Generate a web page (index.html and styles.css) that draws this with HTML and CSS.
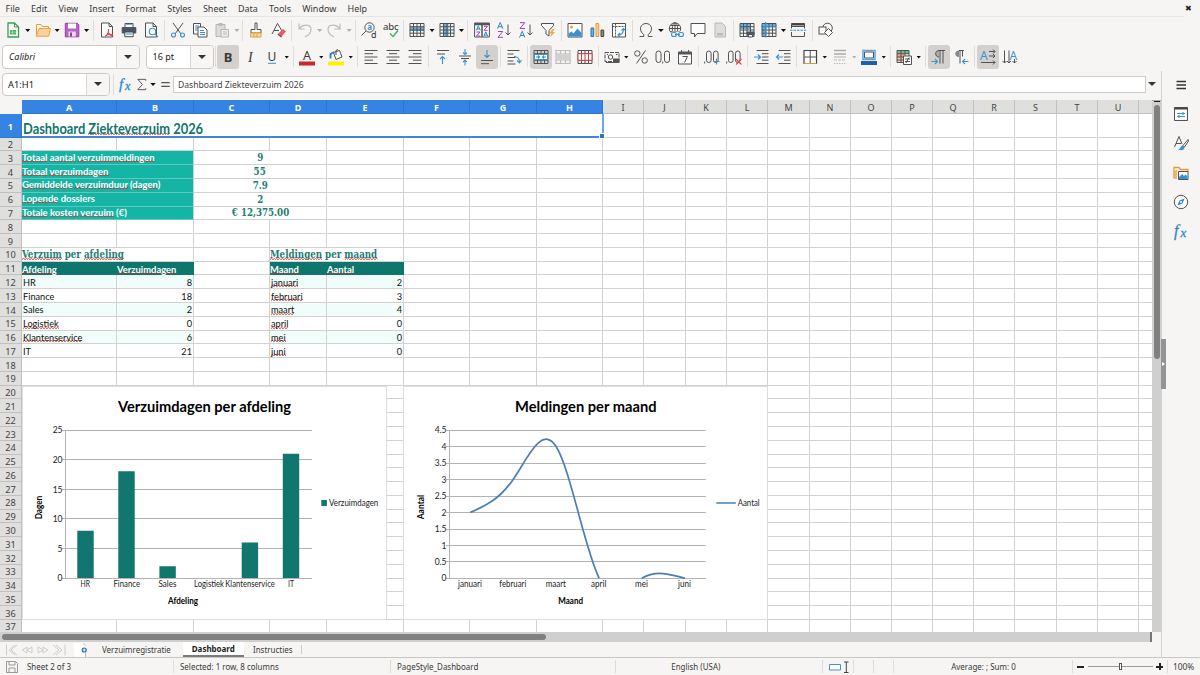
FILE: index.html
```
<!DOCTYPE html>
<html lang="nl">
<head>
    <meta charset="UTF-8">
    <meta name="viewport" content="width=device-width, initial-scale=1.0">
    <title>Dashboard Ziekteverzuim 2026</title>
    <link rel="stylesheet" href="styles.css">
</head>
<body>
    <nav class="menu">
        <span>File</span><span>Edit</span><span>View</span><span>Insert</span><span>Format</span><span>Styles</span><span>Sheet</span><span>Data</span><span>Tools</span><span>Window</span><span>Help</span>
        <b class="close">✖</b>
    </nav>

    <div class="toolbar standard" id="standardBar"></div>

    <div class="toolbar format">
        <div class="combo font-name"><i>Calibri</i><span class="arrow"></span></div>
        <div class="combo font-size"><em>16 pt</em><span class="arrow"></span></div>
        <div class="tools" id="formatBar"></div>
    </div>

    <div class="main">
        <div class="work">
            <div class="formula">
                <div class="combo name-box"><em>A1:H1</em><span class="arrow"></span></div>
                <div class="tools" id="formulaBar"></div>
                <div class="input"><span>Dashboard Ziekteverzuim 2026</span></div>
                <span class="big-arrow"></span>
            </div>

            <div class="sheet-row">
                <div class="sheet">
                    <div class="grid" id="grid"></div>
                    <div class="selection"></div>

                    <svg class="chart chart-bar" viewBox="22 386 365 234">
                        <text class="chart-title" x="118" y="412" textLength="173">Verzuimdagen per afdeling</text>
                        <path class="lines" d="M62 430.5H312M62 459.5H312M62 489.5H312M62 518.5H312M62 548.5H312M62 578.5H312M65.5 430V579"/>
                        <g class="axis end">
                            <text x="62.5" y="433">25</text><text x="62.5" y="462.5">20</text><text x="62.5" y="492.5">15</text>
                            <text x="62.5" y="521.5">10</text><text x="62.5" y="551.5">5</text><text x="62.5" y="581">0</text>
                        </g>
                        <path fill="#10766e" d="M77.3 530.7h16.4V578H77.3zM118.3 471.3h16.4V578h-16.4zM159.4 566.3h16.4V578h-16.4zM241.7 542.4h16.4V578h-16.4zM282.8 453.7h16.4V578h-16.4z"/>
                        <g class="axis">
                            <text x="80.5" y="587.3" textLength="9.5">HR</text><text x="113.5" y="587.3" textLength="26.5">Finance</text>
                            <text x="158.5" y="587.3" textLength="18">Sales</text><text x="194" y="587.3" textLength="30">Logistiek</text>
                            <text x="225.3" y="587.3" textLength="49.5">Klantenservice</text><text x="288" y="587.3" textLength="6">IT</text>
                            <text x="329" y="505.7" textLength="49.3">Verzuimdagen</text>
                        </g>
                        <text class="axis-title" x="168" y="604" textLength="30">Afdeling</text>
                        <text class="axis-title" transform="translate(42.3 519.3) rotate(-90)" textLength="23.5">Dagen</text>
                        <path fill="#10766e" d="M321.3 500h5.6v6h-5.6z"/>
                    </svg>

                    <svg class="chart chart-line" viewBox="403 386 365 234">
                        <text class="chart-title" x="515" y="412" textLength="141.5">Meldingen per maand</text>
                        <path class="lines" d="M446 430.5H706M446 446.5H706M446 463.5H706M446 479.5H706M446 496.5H706M446 512.5H706M446 529.5H706M446 545.5H706M446 561.5H706M446 578.5H706M449.5 430V579"/>
                        <g class="axis end">
                            <text x="446.5" y="433">4.5</text><text x="446.5" y="449.5">4</text><text x="446.5" y="466">3.5</text><text x="446.5" y="482.5">3</text>
                            <text x="446.5" y="499">2.5</text><text x="446.5" y="515.5">2</text><text x="446.5" y="532">1.5</text><text x="446.5" y="548.5">1</text>
                            <text x="446.5" y="564.5">0.5</text><text x="446.5" y="581">0</text>
                        </g>
                        <path class="series" d="M470.4 512.4C484.7 506.2 498.9 500 513.2 479.4S541.8 424 556.1 446.5S584.6 548.9 599.2 578.3M641.7 578.3C656 569.9 670.3 574.1 685 578.3M716.3 503h19.5"/>
                        <g class="axis">
                            <text x="458" y="587.3" textLength="24">januari</text><text x="499.3" y="587.3" textLength="27">februari</text>
                            <text x="545.7" y="587.3" textLength="20.3">maart</text><text x="591" y="587.3" textLength="15.3">april</text>
                            <text x="635" y="587.3" textLength="13">mei</text><text x="678" y="587.3" textLength="13">juni</text>
                            <text x="737.7" y="505.7" textLength="22">Aantal</text>
                        </g>
                        <text class="axis-title" x="558.3" y="604" textLength="24.7">Maand</text>
                        <text class="axis-title" transform="translate(424 519.3) rotate(-90)" textLength="24.5">Aantal</text>
                    </svg>
                </div>
                <div class="vscroll"><div class="thumb"></div></div>
            </div>

            <div class="hscroll"><div class="thumb"></div></div>

            <div class="tabs">
                <svg class="tab-nav" viewBox="0 0 62 14"><path d="M1.500 1.500v11M10 2L4 7l6 5M12 2L6 7l6 5M22 4l-5 3 5 3zM27 4l-5 3 5 3zM33 4l5 3-5 3zM38 4l5 3-5 3zM48 2l6 5-6 5M51 2l6 5-6 5M60 1.500v11"/></svg>
                <svg class="tab-add" viewBox="0 0 14 14"><path d="M0 0h9.500l2 2v12H0z" fill="#fff"/><path d="M11.500 9.500v4.500M9 0.500l2.500 2" stroke="#bbb" fill="none"/><circle cx="10.200" cy="7" r="2.600" fill="#2c6bb5"/><path d="M10.200 5.500v3M8.700 7h3" stroke="#fff"/></svg>
                <span class="tab first"><span>Verzuimregistratie</span></span>
                <span class="tab active"><span>Dashboard</span></span>
                <span class="tab last"><span>Instructies</span></span>
            </div>
        </div>
        <aside class="sidebar" id="sidebar"></aside>
        <div class="handle"></div>
    </div>

    <footer class="status">
        <div class="sheet-no"><svg viewBox="0 0 12 12"><path d="M.5.500h9l2 2v9H.500zM3 .500v3.500h6V.500M3 11.500V7h6v4.500" fill="none" stroke="#999"/></svg><span>Sheet 2 of 3</span></div>
        <div class="selected"><span>Selected: 1 row, 8 columns</span></div>
        <div class="page-style"><span>PageStyle_Dashboard</span></div>
        <div class="lang"><span>English (USA)</span></div>
        <div class="mode"><svg viewBox="0 0 20 12"><path d="M.500 3.500h11v5.500H.500z" fill="#fff" stroke="#3f93cd"/><path d="M15 1h4.500M15 11.500h4.500M17.300 1v10.500" stroke="#444" fill="none"/></svg></div>
        <div class="empty"></div>
        <div class="empty"></div>
        <div class="sum"><span>Average: ; Sum: 0</span></div>
        <div class="zoom"><b></b><i class="slider"><i></i></i><b class="plus"></b></div>
        <div class="percent"><span>100%</span></div>
    </footer>

    <script>
        // Icons are drawn on a 16 x 16 canvas. k = dark stroke, b = blue, r = red, g = grey
        const DOC = '<path class="k w" d="M2.500 1h7.500l3.500 3.500V15h-11zM10 1v3.500h3.500"/>';
        const GRID = '<path class="k" d="M1 1.500h14v13H1zM1 4.700h14M1 8h14M1 11.200h14M4.500 1.500v13M8 1.500v13M11.500 1.500v13"/>';
        const ICONS = {
            new: '<path d="M3 1h6.500l4 4v10H3z" fill="#fff" stroke="#36a04c" stroke-width="1.300"/><path d="M9.500 1v4h4" fill="none" stroke="#36a04c"/><path d="M5 8h6v4.500H5z" fill="#45b35c"/><path d="M5 10.200h6M7.500 8v4.500" stroke="#c9efd0" stroke-width=".6"/>',
            open: '<path d="M1.500 13.500v-11h4.500l1.500 2h6v2" fill="#fff6e5" stroke="#e69a3c"/><path d="M1 14.200L4 6.500h11.500l-1.800 7.700z" fill="#fcd49b" stroke="#eda149"/>',
            save: '<path d="M1.300 1.300h12l1.500 1.500v12H1.300z" fill="#b963c5" stroke="#8f3fa0"/><path d="M4 1.500h8v5H4z" fill="#fff"/><path d="M4.500 9.500h7.300v5H4.500z" fill="#efd9f3"/><path d="M6 10.500h2v4H6z" fill="#8f3fa0"/>',
            pdf: DOC + '<path class="r" d="M6 14.500c3-2 4-5 3.500-7.500M9 10c1 2.500 3 4 5.500 4M6 14.300c2-2 5-2.500 8-1.500"/>',
            print: '<path class="k w" d="M4 1.500h8V6H4z"/><rect x=".7" y="5" width="14.600" height="6.500" rx="1.200" fill="#4d5660"/><path d="M3.800 10h8.400v4.700H3.800z" fill="#fff" stroke="#444"/><path class="b" d="M5 12h6"/><path d="M4 2.500h8" stroke="#64b1e2"/>',
            preview: DOC + '<circle class="b" cx="9.500" cy="9.500" r="3.200" fill="#e8f4fc"/><path class="b" d="M12 12l3 3" stroke-width="1.600"/>',
            cut: '<path class="k" d="M3 1l8 11M13 1L5 12"/><circle class="b" cx="3.500" cy="13" r="2"/><circle class="b" cx="12.500" cy="13" r="2"/>',
            copy: '<path class="k w" d="M1.500 1.500h7V12h-7z"/><path d="M3 4h4M3 6h4M3 8h4" class="b"/><path class="k w" d="M6 5h6l3 3v7H6z"/><path d="M8 8.500h4M8 10.500h5M8 12.500h5" class="b"/>',
            paste: '<path d="M2 2.500h9v12H2z" fill="#ddd" stroke="#b5b5b5"/><path d="M4.500 1h4v3h-4z" fill="#bbb"/><path d="M7 7.500h7.500V15H7z" fill="#eee" stroke="#b5b5b5"/><path class="g" d="M9 10h4M9 12h4"/>',
            brush: '<path class="k w" d="M7 1h2v6.500h4V11H3V7.500h4z"/><path d="M3 11h10v4H2.500z" fill="#fcd9a5" stroke="#e69a3c"/><path d="M6 12v3M9 12v3" stroke="#e69a3c"/>',
            clear: '<path class="k" d="M2 12L7.500 1.500 12 9M4 8.500h5" stroke-width="1.400"/><path d="M8.500 11.500L13 7l3 2.500-4.500 5z" fill="#e75a5f"/><path d="M8 12l3.500 3" stroke="#b52d35" stroke-width="1.500"/>',
            undo: '<path class="g" d="M2 1.500V7h5.500M2 7c4-5.500 12-5 12 .5 0 3-3 6-6 7.500"/>',
            redo: '<path class="g" d="M14 1.500V7H8.500M14 7C10 1.500 2 2 2 7.500c0 3 3 6 6 7.500"/>',
            find: '<circle class="k" cx="8.500" cy="5.500" r="4.700"/><path class="k" d="M5 9l-4.500 4.500" stroke-width="1.800"/><text x="6.200" y="8" font-size="8" font-weight="bold" fill="#3b92d1">a</text><text x="10" y="15.500" font-size="9" fill="#333">d</text>',
            spell: '<text x="0" y="7.800" font-size="9.600" textLength="15.500" fill="#333">abc</text><path d="M7 11.500l3 3 5-6" fill="none" stroke="#41b36a" stroke-width="1.500"/>',
            rows: '<path fill="#64b1e2" d="M1 5h14v4H1z"/>' + GRID,
            cols: '<path fill="#64b1e2" d="M4.500 1.500h5v13h-5z"/>' + GRID,
            sort: '<path class="k w" d="M.6 1h7.400v14H.600zM8 1h7.400v14H8z"/><path fill="#555" d="M.6 1h14.800v2.300H.600z"/><g class="zig"><path class="ta" d="M2.300 8.300l2-4.500 2 4.500M3 7h2.600M9.800 14.300l2-4.500 2 4.500M10.500 13h2.600"/><path class="tz" d="M2.500 10h3.500L2.500 14h3.700M10 4.300h3.500L10 8.300h3.700"/></g>',
            az: '<path class="ta" d="M1.500 6.700L4.200.5l2.700 6.200M2.400 4.700h3.700"/><path class="tz" d="M2 9.500h4.700L2 15.300h5"/><path class="k" d="M12 2.500V13M9.500 10.500L12 13l2.500-2.500"/>',
            za: '<path class="ta" d="M1.500 15.500L4.200 9.300l2.700 6.200M2.400 13.500h3.700"/><path class="tz" d="M2 .7h4.700L2 6.500h5"/><path class="k" d="M12 2.500V13M9.500 10.500L12 13l2.500-2.500"/>',
            filter: '<path class="k w" d="M1.500 1.500h12v2L9 8.500V14l-3-2V8.500L1.500 3.500z"/><path d="M12.500 7L9 11.500h2.500L10 15.500l5-5.500h-2.500L14.500 7z" fill="#f3a64d"/>',
            image: '<path class="k w" d="M1 1.500h14v13.500H1z"/><circle cx="4.500" cy="5" r="1.500" fill="#f0a04b"/><path d="M1.500 14.500v-3l3-2 2 2 4-5 4 4.500v3.500z" fill="#3b92d1"/>',
            chart: '<path d="M2 6h2.700v8.500H2z" fill="#64b1e2" stroke="#2c75b5"/><path d="M7 1.500h2.700v13H7z" fill="#fbd08f" stroke="#e69a3c"/><path d="M12 8h2.700v6.500H12z" fill="#888" stroke="#444"/>',
            pivot: '<path class="k w" d="M1.500 1.500h13v13.500h-13z"/><path class="k" d="M1.500 4.500h13M4.500 1.500V15" stroke-dasharray="2 1"/><path class="b" d="M7 13c4 0 5.500-2 5.500-6M10.500 8.500l2-2 2 2M9 11l-2 2 2 2"/>',
            omega: '<path class="k" d="M1.500 14.500h4.300v-1.800C0 8 2.500 1.500 8 1.500s8 6.500 2.200 11.200v1.800h4.300" stroke-width="1.300"/>',
            link: '<circle class="k" cx="7" cy="6.500" r="5.700"/><path class="k" d="M1.300 6.500h11.400M7 .8v11.400M2.500 3.500h9M2.500 9.500h9"/><ellipse class="k" cx="7" cy="6.500" rx="2.700" ry="5.700"/><path d="M3.500 9.500h12.500v6H3.500z" fill="#f6f5f4"/><rect class="b" x="3.500" y="10.500" width="5" height="4" rx="2"/><rect class="b" x="10.500" y="10.500" width="5" height="4" rx="2"/><path class="b" d="M7 12.500h5"/>',
            comment: '<path class="k w" d="M1 1.500h14v10H7L4.500 15v-3.500H1z"/>',
            footer: '<path d="M3 1h7l3.500 3.500V15H3z" fill="#ddd" stroke="#b9b9b9"/><path d="M5 11h6v2.500H5z" fill="#bbb"/>',
            printarea: '<path fill="#64b1e2" d="M1 1h10v6H1z"/>' + GRID + '<rect x="7.500" y="9.500" width="8" height="4" rx="1" fill="#4d5660"/><path class="k w" d="M9.500 12.500h4V15h-4z"/>',
            freeze: '<path fill="#64b1e2" d="M1 1.500h4.500v13H1zM5 1.500h10v3H5z"/>' + GRID + '<path class="b" d="M4.700 0v15.500M0 4.700h15"/>',
            split: '<path class="k" d="M1.500 6.500v-5h13v5M1.500 10v4.500h13V10M1.500 4.500h13"/><path d="M1.500 1.500h13v2h-13z" fill="#444"/><path class="b" d="M0 8.300h16" stroke-dasharray="2.500 1"/>',
            shapes: '<circle class="k" cx="9.500" cy="6" r="4.800"/><rect class="k w" x="1" y="5" width="7" height="7"/><path class="k w" d="M10.500 6.500l4 4-4 4-4-4z"/>',
            bold: '<text class="glyph" x="3.700" y="12.700" font-size="13" font-weight="bold">B</text>',
            italic: '<text class="glyph" x="6" y="12.700" font-size="14" font-style="italic" font-family="Liberation Serif">I</text>',
            underline: '<text class="glyph" x="3.600" y="12" font-size="12">U</text><path d="M4 14.300h8" stroke="#3b92d1"/>',
            color: '<text class="glyph" x="4" y="11" font-size="12.500">A</text><path fill="#c62a2a" d="M0 12.500h16V16.500H0z"/>',
            fill: '<path class="k w" d="M5.500 3.500l6-2 2.500 6.500-6 2.500z" stroke-width="1.300"/><path class="k" d="M8 6V1.500l2-1"/><path d="M2.500 9.500V5L6 3" fill="none" stroke="#2d7ec0" stroke-width="1.800"/><path fill="#fff200" d="M0 12.500h16V16.500H0z"/>',
            left: '<path class="k" d="M1.500 1.500h13M1.500 4.700h8.500M1.500 8h13M1.500 11.200h8.500M1.500 14.500h13"/>',
            center: '<path class="k" d="M1.500 1.500h13M4 4.700h8M1.500 8h13M4 11.200h8M1.500 14.500h13"/>',
            right: '<path class="k" d="M1.500 1.500h13M6 4.700h8.500M1.500 8h13M6 11.200h8.500M1.500 14.500h13"/>',
            top: '<path class="k" d="M2 1.500h12M2 5h8"/><path class="b" d="M7.500 15V7.500M5 10l2.500-2.500L10 10"/>',
            middle: '<path class="k" d="M2 7h12M4 9.500h8"/><path class="b" d="M8 0v5.500M6 3.500l2 2 2-2M8 16.500V11M6 13l2-2 2 2"/>',
            bottom: '<path class="k" d="M2 11.500h12M2 14.700h8"/><path class="b" d="M8 1v7.500M5.500 6L8 8.500 10.500 6"/>',
            wrap: '<path class="k" d="M1.500 1.500h12M1.500 5h6M1.500 8.500h8M1.500 12h6M1.500 15h8"/><path class="b" d="M8 7.500c4 0 5.500 2 5.500 6M11 11.500l2.500 2.500 2-3"/>',
            merge: GRID + '<path d="M1.500 5.500h13v5h-13z" fill="#fff" stroke="#3b92d1"/><path class="b" d="M3 8h3.500M9.500 8H13M5 6.500L6.500 8 5 9.500M11 6.500L9.500 8 11 9.500"/>',
            merge2: '<path class="g" d="M1 1.500h14v13H1zM1 5h14M1 11h14M5.500 1.500V5M10.500 1.500V5M5.500 11v3.500M10.500 11v3.500"/><path fill="#d0d0d0" d="M1.500 5.500h13v5h-13z"/>',
            merge3: GRID + '<path d="M1 4.700h14v6.600H1zM4.500 4.700v6.600M8 4.700v6.600M11.500 4.700v6.600" fill="#fff" stroke="#dd3c44"/>',
            currency: '<path class="k" d="M1 3.500h14v9H1z" stroke-dasharray="4 1"/><circle cx="6.500" cy="8" r="2.200" class="k"/><path d="M9 9.500h6.500V14H9z" fill="#555"/><path class="k" d="M2 13.500h8M3 5.500h1M12 5.500h1.500"/>',
            percent: '<circle class="k" cx="4.300" cy="4.500" r="2.700"/><circle class="k" cx="11.700" cy="11.500" r="2.700"/><path class="k" d="M12.500 1.500L3.500 14.500"/>',
            number: '<rect class="k" x="1" y="2" width="5" height="11.500" rx="2.500"/><rect class="k" x="9.500" y="2" width="5" height="11.500" rx="2.500"/><path class="k" d="M7.700 12.500v2"/>',
            date: '<path class="k w" d="M1.500 3h13v12h-13z"/><path d="M1.500 3h13v2.500h-13z" fill="#555"/><path class="k" d="M4.500 1v3M11.500 1v3M5.500 7.500h5L7.500 13.500"/>',
            adddec: '<path class="k" d="M.7 12.500v2"/><rect class="k" x="2.500" y="2" width="4.600" height="11.500" rx="2.300"/><rect class="k" x="9.500" y="2" width="4.600" height="11.500" rx="2.300"/><path class="b" d="M12.500 9.500v6M9.500 12.500h6"/>',
            deldec: '<path class="k" d="M.7 12.500v2"/><rect class="k" x="2.500" y="2" width="4.600" height="11.500" rx="2.300"/><rect class="k" x="9.500" y="2" width="4.600" height="11.500" rx="2.300"/><path class="r" d="M10 10l5.500 5.500M15.500 10L10 15.500"/>',
            indent: '<path class="k" d="M2.500 1.500h12M8 4.700h6.500M8 8h6.500M8 11.200h6.500M2.500 14.500h12"/><path class="b" d="M0 8h6.500M4 5.500L6.500 8 4 10.500"/>',
            outdent: '<path class="k" d="M2.500 1.500h12M8 4.700h6.500M8 8h6.500M8 11.200h6.500M2.500 14.500h12"/><path class="b" d="M.5 8H7M3 5.500L.5 8 3 10.500"/>',
            borders: '<path d="M2 1.500h12.500v13H2z" fill="#fff" stroke="#444" stroke-width="1.200"/><path class="k" d="M8.200 1.500v13M2 8h12.500"/><path d="M2 14.500h12.500" stroke="#e69a3c"/>',
            lines: '<path d="M2 1.500h12M2 5h12" stroke="#aaa" stroke-width="1.500"/><path class="g" d="M2 8h12"/><path class="g" d="M2 11h12" stroke-dasharray="3 1"/><path class="g" d="M2 14.500h12" stroke-dasharray="1.500 1"/>',
            bcolor: '<path d="M2 1.500h12v9H2z" fill="#f7fbff" stroke="#5ba6dc" stroke-width="1.500"/><path class="k" d="M3.500 3h9v6h-9z"/><path fill="#245f9e" d="M0 12h16V16H0z"/>',
            cond: '<path fill="#6cc37c" d="M1 1.500h12v3H1z"/><path fill="#f19a9a" d="M1 4.700h7v4H1z"/><path fill="#fbd08f" d="M1 9h6v4H1z"/><path class="k" d="M1 1.500h12v12H1zM1 4.700h12M1 8h12M1 11h12M5 1.500v12M9 1.500v12"/><path class="k w" d="M7.500 7h8v8.500h-8z"/><path class="k" d="M9 10h5M9 12.500h5M13 8.500l-3 5.500"/>',
            ltr: '<path d="M8 1.500C3.500 1.500 3.500 8 8 8z" fill="#aaa"/><path class="k" d="M14 1.500H8C3.500 1.500 3.500 8 8 8M9 1.500v13M12 1.500v13"/><path class="b" d="M.5 12.500h6M4 10l2.500 2.500L4 15"/>',
            rtl: '<path d="M6 1.500C1 1.500 1 8 6 8z" fill="#888"/><path d="M6 1.500h5" class="k"/><path class="k" d="M7 1.500v13M9.500 1.500v6" stroke-width="1.400"/><path class="b" d="M15.500 12.500h-6M12 10l-2.500 2.500L12 15"/>',
            horiz: '<text x="0" y="10.500" font-size="12" fill="#3b92d1">A</text><path class="k" d="M9 2.500h6M9 7h6M1 13.500h14M13 .5l2 2-2 2M13 5l2 2-2 2M13 11.500l2 2-2 2"/>',
            vert: '<text x="7.500" y="10.500" font-size="12" fill="#3b92d1">A</text><path class="k" d="M2.500 1.500V14M7 1.500V14M12.500 10v4M.5 12l2 2 2-2M5 12l2 2 2-2M10.500 12l2 2 2-2"/>',
            fx: '<text class="fx" x="1" y="12.500" font-size="16">f</text><text class="fx" x="7.500" y="14" font-size="13">x</text>',
            sigma: '<path class="k" d="M12.500 4V2.500H4L9 8l-5 5.500h8.500V12" stroke-width="1.200"/>',
            equals: '<path d="M3.500 6h9M3.500 10h9" stroke="#555" stroke-width="1.500"/>',
            burger: '<path d="M3.500 4.500h9.500M3.500 8h9.500M3.500 11.500h9.500" stroke="#333" stroke-width="1.400"/>',
            props: '<path class="k w" d="M1.500 1.500h13V14.500h-13z"/><path d="M1.500 1.500h13v2h-13z" fill="#444"/><path class="b" d="M4 7.500h8M4 10.500h8M10 6v3M6 9v3"/>',
            styles: '<path class="k" d="M1.500 12L6 1.500l3 7.500M3 8.500h5" stroke-width="1.600"/><path class="k w" d="M15 4.500l-5 6 1.500 1.500 4-6z"/><path d="M10 10.500c-3 0-2 3.500-5 4 3.500 1.500 7 .5 6.500-2.500z" fill="#3b92d1"/>',
            gallery: '<path d="M1 13.500v-11h5l1.500 2h7.500v2" fill="#fff1dc" stroke="#e69a3c" stroke-width="1.300"/><path d="M1 14V6l3-1v9z" fill="#f3b266"/><path class="k w" d="M5.500 6.500H15v8H5.500z"/><path d="M6 14V12l3-3 2 2 1.500-1.500 2 2V14z" fill="#3b92d1"/>',
            nav: '<circle cx="8" cy="8" r="6.700" class="k w"/><path d="M11.500 4.500L9.500 9.500l-5 2 2-5z" fill="#2f86c8"/><circle cx="8" cy="8" r="1" fill="#fff"/>'
        };

        // "name:width", * marks a pressed button, "|" is a separator, "v" a dropdown arrow
        const STANDARD = 'new:22 v:7.500 open:22 v:7.300 save:22 v:7.500 |:6 pdf:22 print:22 preview:22 |:4.800 cut:22 copy:22 paste:22 vg:7.500 |:4.800 brush:22 clear:22 |:4.500 undo:22 vg:7.500 redo:22 vg:7.500 |:5.500 find:21.500 spell:21.500 |:5 rows:22 v:7.300 cols:22 v:7.500 |:5.500 sort:22 az:22 za:22 filter:22 |:5.500 image:22 chart:22 pivot:22 |:4.500 omega:22 v:8.500 link:22 comment:22 footer:22 |:5 printarea:21.500 freeze:22 v:7.500 split:22 |:6 shapes:22';
        const FORMAT = '|:3.500 *bold:22 italic:22 underline:22 v:7.500 |:5 color:22 v:7.500 fill:22 v:7.500 |:5.500 left:22 center:22 right:22 |:5.500 top:22 middle:22 *bottom:22 |:5.500 wrap:22 |:5 *merge:22 merge2:22 merge3:22 |:4.500 currency:22 v:7.500 percent:22 number:22 date:22 |:5 adddec:22 deldec:22 |:5.500 indent:22 outdent:22 |:4.500 borders:22 v:7.500 lines:22 vg:7.500 bcolor:22 v:7.500 |:5.500 cond:22 v:7.500 |:5.500 *ltr:22 rtl:22 |:5 *horiz:22 vert:22';

        function drawTools(id, spec) {
            document.getElementById(id).innerHTML = spec.split(' ').map(item => {
                let [name, width] = item.split(':');
                const on = name[0] === '*';
                name = name.replace('*', '');
                if (name === '|') return `<span class="sep" style="width:${width}px"></span>`;
                if (name === 'v' || name === 'vg') return `<span class="drop ${name}" style="width:${width}px"></span>`;
                return `<span class="tool ${on ? 'on' : ''}" style="width:${width}px"><svg viewBox="0 0 16 16">${ICONS[name]}</svg></span>`;
            }).join('');
        }

        drawTools('standardBar', STANDARD);
        drawTools('formatBar', FORMAT);
        drawTools('formulaBar', '|:7 fx:17 sigma:15 v:8 equals:17');
        drawTools('sidebar', 'burger:22 props:22 styles:22 gallery:22 nav:22 fx:22');

        // Fixed-length chart labels squeeze the letters, not only the gaps
        document.querySelectorAll('.chart text[textLength]').forEach(t => t.setAttribute('lengthAdjust', 'spacingAndGlyphs'));

        // Right edge of every column
        const COLS = [22, 117, 194, 270, 327, 404, 470, 537, 603, 644, 686, 727, 768, 810, 851, 892, 933, 974, 1015, 1057, 1098, 1139, 1180];
        const ROWS = 37;

        const cells = {};
        function put(row, col, text, cls, span) {
            cells[row + '-' + col] = { text, cls: cls || '', span: span || 1 };
        }
        const w = s => `<u>${s}</u>`;

        put(1, 1, 'Dashboard ' + w('Ziekteverzuim') + ' 2026', 'title', 8);
        [[w('Totaal') + ' ' + w('aantal') + ' ' + w('verzuimmeldingen'), '9'],
         [w('Totaal') + ' ' + w('verzuimdagen'), '55'],
         [w('Gemiddelde') + ' ' + w('verzuimduur') + ' (' + w('dagen') + ')', '7.9'],
         [w('Lopende') + ' dossiers', '2'],
         [w('Totale') + ' ' + w('kosten') + ' ' + w('verzuim') + ' (€)', '€ 12,375.00']
        ].forEach(([label, value], i) => {
            put(3 + i, 1, label, 'kpi', 2);
            put(3 + i, 3, value, 'value', 2);
        });
        put(10, 1, w('Verzuim') + ' per ' + w('afdeling'), 'section', 2);
        put(10, 4, w('Meldingen') + ' per ' + w('maand'), 'section', 2);
        put(11, 1, w('Afdeling'), 'head');
        put(11, 2, w('Verzuimdagen'), 'head');
        put(11, 4, w('Maand'), 'head');
        put(11, 5, w('Aantal'), 'head');
        [['HR', 8, w('januari'), 2], ['Finance', 18, w('februari'), 3], ['Sales', 2, w('maart'), 4],
         [w('Logistiek'), 0, w('april'), 0], [w('Klantenservice'), 6, w('mei'), 0], ['IT', 21, w('juni'), 0]
        ].forEach((r, i) => {
            const band = i % 2 ? '' : ' band';
            put(12 + i, 1, r[0], 'text' + band);
            put(12 + i, 2, r[1], 'num' + band);
            put(12 + i, 4, r[2], 'text' + band);
            put(12 + i, 5, r[3], 'num' + band);
        });

        const grid = document.getElementById('grid');
        grid.style.gridTemplateColumns = COLS.map((x, i) => (x - (COLS[i - 1] || 0)) + 'px').join(' ');
        let html = '<div class="corner"></div>';
        for (let c = 1; c < COLS.length; c++) {
            html += `<div class="col ${c <= 8 ? 'picked' : ''}">${c < 22 ? String.fromCharCode(64 + c) : ''}</div>`;
        }
        for (let r = 1; r <= ROWS; r++) {
            html += `<div class="row-no ${r === 1 ? 'picked' : ''}">${r}</div>`;
            for (let c = 1; c < COLS.length; c++) {
                const cell = cells[r + '-' + c];
                if (!cell) {
                    html += '<div class="cell"></div>';
                    continue;
                }
                html += `<div class="cell ${cell.cls}" style="grid-column:span ${cell.span}"><span>${cell.text}</span></div>`;
                c += cell.span - 1;
            }
        }
        grid.innerHTML = html;
    </script>
</body>
</html>
```
FILE: styles.css
```
* {
    box-sizing: border-box;
}
body {
    margin: 0;
    width: 1200px;
    height: 675px;
    overflow: hidden;
    display: flex;
    flex-direction: column;
    background-color: #f6f5f4;
    font-family: 'Noto Sans', sans-serif;
    font-size: 9px;
    color: #3a3a3a;
}
.menu {
    display: flex;
    align-items: center;
    gap: 11.2px;
    height: 17px;
    width: 1184px;
    flex: none;
    padding-left: 5.5px;
    border-bottom: 1px solid #e6e5e4;
    white-space: nowrap;
}
.close {
    width: 8px;
    margin: 0 -9px 0 auto;
    font-family: 'DejaVu Sans', sans-serif;
    font-size: 8px;
    color: #222;
}
.toolbar {
    display: flex;
    align-items: center;
    height: 26px;
    flex: none;
    padding-left: 2px;
}
.toolbar.format {
    height: 28px;
    padding-bottom: 1px;
}
.tools {
    display: flex;
    align-items: center;
    flex: none;
}
.tool {
    display: flex;
    align-items: center;
    justify-content: center;
    height: 24px;
    flex: none;
    border-radius: 3px;
}
.tool.on {
    background-color: #d4d0cd;
}
.tool svg {
    width: 16px;
    height: 16px;
    overflow: visible;
}
.sep {
    height: 21px;
    flex: none;
    background: linear-gradient(#dedddb, #dedddb) center / 1px 100% no-repeat;
}
.drop {
    flex: none;
    height: 3px;
    margin-top: 1px;
    background-color: #111;
    clip-path: polygon(16% 0, 84% 0, 50% 100%);
}
.drop.vg {
    opacity: 0.3;
}

/* icon strokes */
.k {
    fill: none;
    stroke: #505254;
    stroke-width: 1;
}
.k.w {
    fill: #fcfcfc;
}
.b {
    fill: none;
    stroke: #3b92d1;
    stroke-width: 1.1;
}
.r {
    fill: none;
    stroke: #e0484e;
    stroke-width: 1.2;
}
.g {
    fill: none;
    stroke: #bcbcbc;
    stroke-width: 1.2;
}
.ta {
    fill: none;
    stroke: #2f86c8;
}
.tz {
    fill: none;
    stroke: #a144b3;
}
.glyph {
    fill: #3a3a3a;
}
.fx {
    font-family: 'Liberation Serif', serif;
    font-style: italic;
    fill: #2f86c8;
    stroke: #2f86c8;
    stroke-width: 0.3;
}

.combo {
    display: flex;
    align-items: center;
    flex: none;
    height: 24px;
    border: 1px solid #cdc9c6;
    border-radius: 4px;
    background-color: #fff;
    padding-left: 6px;
    color: #222;
}
.combo em {
    font-style: normal;
}
.combo .arrow {
    width: 23px;
    height: 22px;
    margin-left: auto;
    border-left: 1px solid #dad7d5;
    border-radius: 0 3px 3px 0;
    background-color: #f7f6f5;
    display: flex;
    align-items: center;
    justify-content: center;
}
.arrow::after, .big-arrow::after {
    content: '';
    border: 4px solid transparent;
    border-top-color: #333;
    border-bottom: 0;
}
.font-name {
    width: 138px;
    margin-right: 5.5px;
}
.font-size {
    width: 68px;
}
.name-box {
    width: 108px;
    height: 23px;
    padding-left: 5px;
}
.name-box em {
    font-size: 9.3px;
}
.name-box .arrow {
    height: 21px;
}

.main {
    display: flex;
    height: 587px;
    flex: none;
    position: relative;
    border-bottom: 1px solid #c8c7c5;
}
.work {
    width: 1162px;
    flex: none;
    display: flex;
    flex-direction: column;
    border-right: 1px solid #d5d3d1;
}
.formula {
    display: flex;
    align-items: center;
    height: 29px;
    flex: none;
    padding: 0 0 3px 2px;
}
.formula .tool svg {
    width: 15px;
    height: 15px;
}
.input {
    width: 973px;
    height: 17px;
    margin-left: -1px;
    padding-left: 4px;
    line-height: 15px;
    border: 1px solid #cfccca;
    background-color: #fff;
    color: #444;
}
.input span {
    display: inline-block;
    transform: scaleX(0.957);
    transform-origin: left;
}
.big-arrow {
    display: flex;
    margin-left: 2px;
}
.sheet-row {
    display: flex;
    height: 532px;
    flex: none;
}
.sheet {
    position: relative;
    width: 1152px;
    overflow: hidden;
    background-color: #fff;
}
.grid {
    display: grid;
    grid-template-rows: 14px 24px 13.4px;
    grid-auto-rows: 13.785px;
    width: 1180px;
}
.col, .row-no, .corner {
    display: flex;
    align-items: center;
    justify-content: center;
    background-color: #dfdfde;
    border-right: 1px solid #c0c0c0;
    border-bottom: 1px solid #c0c0c0;
    color: #444;
    line-height: 1;
}
.corner {
    background-color: #f6f5f4;
    border-color: #f6f5f4;
}
.col {
    padding-top: 1px;
}
.row-no {
    font-size: 9.2px;
    padding-top: 1.5px;
}
.picked {
    background-color: #3584e4;
    border-color: #2d76cf;
    color: #fff;
    font-weight: bold;
}
.cell {
    display: flex;
    align-items: center;
    min-width: 0;
    padding: 1px 0 0 1px;
    border-right: 1px solid #d2d2d2;
    border-bottom: 1px solid #d2d2d2;
    font-family: Lato, sans-serif;
    font-size: 9.2px;
    line-height: 11px;
    white-space: nowrap;
    color: #111;
}
.cell span {
    transform-origin: left;
}
/* spelling marks */
.cell u {
    text-decoration: none;
    background: url("data:image/svg+xml,%3Csvg xmlns='http://www.w3.org/2000/svg' width='3' height='2'%3E%3Cpath d='M0 1.6L1.500 .4L3 1.600' fill='none' stroke='%23d82828' stroke-width='.9'/%3E%3C/svg%3E") 0 95% repeat-x;
}
.cell.title {
    font-size: 15px;
    line-height: 17px;
    font-weight: bold;
    color: #0f766e;
    padding-top: 5px;
}
.cell.title span {
    transform: scaleX(0.858);
}
.cell.title u {
    background-position: 0 92%;
}
.cell.kpi, .cell.head {
    color: #fff;
    font-weight: bold;
    font-size: 9.4px;
}
.cell.kpi {
    background-color: #14b5a4;
    border-bottom-color: #5fc9bd;
    padding: 0 0 1px;
}
.cell.kpi span {
    transform: scaleX(1.01);
}
.cell.kpi u, .cell.head u {
    background-position: 0 90%;
}
.cell.head {
    background-color: #0f766e;
    border-color: #0f766e;
    padding: 2px 0 0;
}
.cell.value, .cell.section {
    font-family: 'DejaVu Serif Condensed', 'DejaVu Serif', serif;
    font-stretch: condensed;
    font-size: 10.6px;
    font-weight: bold;
    color: #1d7c71;
}
.cell.value {
    justify-content: center;
    padding: 0;
}
.cell.value span {
    transform: scaleX(0.91);
    transform-origin: center;
}
.cell.section {
    padding: 1px 0 0;
}
.cell.section span {
    transform: scaleX(0.912);
}
.cell.num {
    justify-content: flex-end;
    padding-right: 1px;
}
.cell.band {
    background-color: #f0fdfa;
}
.selection {
    position: absolute;
    left: 22px;
    top: 14px;
    width: 582px;
    height: 24px;
    border-right: 2px solid #6ea3e6;
    border-bottom: 2px solid #4584dc;
}
.selection::after {
    content: '';
    position: absolute;
    right: -3px;
    bottom: -3px;
    width: 4px;
    height: 4px;
    background-color: #2d72cf;
    border: 1px solid #fff;
    box-sizing: content-box;
}

/* charts float over the cells */
.chart {
    position: absolute;
    top: 286px;
    width: 365px;
    height: 234px;
    background-color: #fff;
    outline: 1px solid #dedede;
    outline-offset: -1px;
    font-family: Lato, sans-serif;
}
.chart-bar {
    left: 22px;
}
.chart-line {
    left: 403px;
}
.chart-title {
    font-size: 15.6px;
    font-weight: bold;
    fill: #000;
}
.axis {
    font-size: 8.8px;
    fill: #222;
}
.axis.end {
    text-anchor: end;
    font-size: 8.5px;
}
.axis-title {
    font-size: 8.6px;
    font-weight: bold;
}
.lines {
    stroke: #b3b3b3;
    fill: none;
}
.series {
    stroke: #4a7ebb;
    stroke-width: 1.7;
    fill: none;
}

.vscroll {
    width: 9px;
    background-color: #cfcfcf;
    border-top: 1px solid #aaa;
    padding: 0 1.5px;
}
.vscroll::before {
    content: '';
    display: block;
    height: 1px;
    background-color: #222;
}
.vscroll .thumb {
    height: 254px;
    margin-top: 3px;
    border-radius: 3px;
    background-color: #7f807f;
}
.hscroll {
    width: 1152px;
    height: 10px;
    flex: none;
    padding: 2px;
    background-color: #cfcfcf;
    border-right: 2px solid #777;
}
.hscroll .thumb {
    width: 544px;
    height: 6px;
    border-radius: 3px;
    background-color: #7f807f;
}
.tabs {
    display: flex;
    height: 15px;
    flex: none;
}
.tab-nav {
    width: 62px;
    height: 14px;
    margin: 1px 0 0 5px;
    fill: none;
    stroke: #cfcdcb;
}
.tab-add {
    width: 14px;
    height: 14px;
    margin: 1px 0 0 7px;
}
.tab {
    display: flex;
    align-items: center;
    height: 15px;
    flex: none;
    white-space: nowrap;
}
.tab span {
    transform: scaleX(0.885);
    transform-origin: left;
}
.tab.first {
    width: 94.5px;
    padding-left: 14px;
}
.tab.active {
    width: 61px;
    justify-content: center;
    background-color: #fff;
    border-bottom: 2px solid #7a7a7a;
    font-weight: bold;
    color: #222;
}
.tab.active span {
    transform-origin: center;
}
.tab.last {
    padding-left: 9px;
    width: 58.5px;
    background: linear-gradient(#ccc, #ccc) right center / 1px 9px no-repeat;
}
.sidebar {
    width: 38px;
    display: flex;
    flex-direction: column;
    align-items: center;
    padding: 2px 1px 0 0;
}
.sidebar .tool {
    height: 24px;
    margin-bottom: 5.2px;
}
/* sidebar grip */
.handle {
    position: absolute;
    left: 1161px;
    top: 268px;
    width: 5px;
    height: 50px;
    background-color: #949494;
}
.handle::after {
    content: '';
    position: absolute;
    top: 23px;
    left: 1px;
    border: 2.5px solid transparent;
    border-left: 3px solid #fff;
    border-right: 0;
}

.status {
    display: flex;
    height: 17px;
    align-items: center;
    white-space: nowrap;
}
.status > div {
    display: flex;
    align-items: center;
    height: 13px;
    flex: none;
    padding-left: 6px;
    border-right: 1px solid #dedddb;
}
.status span {
    transform: scaleX(0.885);
    transform-origin: left;
}
.status .sheet-no {
    width: 174px;
}
.status .selected {
    width: 217px;
}
.status .page-style {
    width: 225px;
}
.status .lang {
    width: 207px;
    padding: 0 47px 0 0;
    justify-content: center;
}
.status .lang span, .status .sum span {
    transform-origin: center;
}
.status .mode {
    width: 31px;
}
.status .empty {
    width: 20px;
}
.status .sum {
    width: 179px;
    padding: 0;
    justify-content: center;
}
.status .zoom {
    width: 95px;
    padding: 0 3px 0 4px;
}
.status .percent {
    padding-left: 5px;
    border: 0;
}
.status .percent span {
    transform: scaleX(0.93);
}
.sheet-no svg {
    width: 12px;
    height: 12px;
    margin-right: 9px;
}
.mode svg {
    width: 20px;
    height: 12px;
    flex: none;
}
.zoom b {
    width: 7px;
    height: 2px;
    background-color: #222;
    position: relative;
    flex: none;
}
.zoom .plus::after {
    content: '';
    position: absolute;
    left: 2.5px;
    top: -2.5px;
    width: 2px;
    height: 7px;
    background-color: #222;
}
.slider {
    width: 65px;
    height: 1px;
    margin: 0 3px 0 4px;
    background-color: #999;
    display: flex;
    align-items: center;
    justify-content: center;
}
.slider i {
    width: 3px;
    height: 7px;
    flex: none;
    border: 1px solid #555;
    background-color: #fff;
}
```
